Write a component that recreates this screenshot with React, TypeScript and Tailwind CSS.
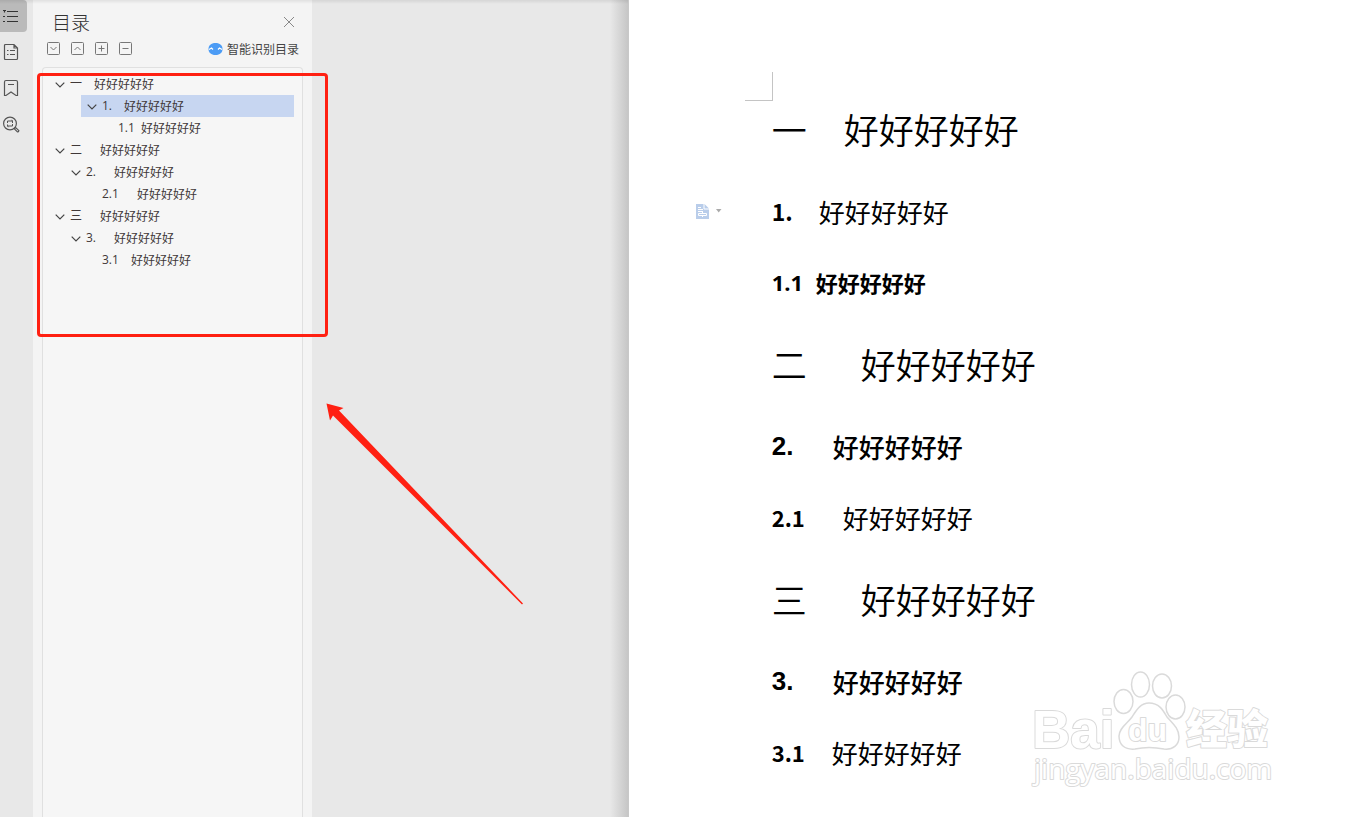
import React from "react";

type TreeRow = {
  label: string;
  text: string;
  indent: string;
  labelWidth: string;
  expandable?: boolean;
  selected?: boolean;
};

const TITLE = "好好好好好";

const rows: TreeRow[] = [
  { label: "一", text: TITLE, indent: "ml-3", labelWidth: "w-6", expandable: true },
  { label: "1.", text: TITLE, indent: "ml-[38px] pl-1.5", labelWidth: "w-[22px]", expandable: true, selected: true },
  { label: "1.1", text: TITLE, indent: "ml-[75px]", labelWidth: "w-[23px]" },
  { label: "二", text: TITLE, indent: "ml-3", labelWidth: "w-[30px]", expandable: true },
  { label: "2.", text: TITLE, indent: "ml-7", labelWidth: "w-7", expandable: true },
  { label: "2.1", text: TITLE, indent: "ml-[59px]", labelWidth: "w-[35px]" },
  { label: "三", text: TITLE, indent: "ml-3", labelWidth: "w-[30px]", expandable: true },
  { label: "3.", text: TITLE, indent: "ml-7", labelWidth: "w-7", expandable: true },
  { label: "3.1", text: TITLE, indent: "ml-[59px]", labelWidth: "w-[29px]" },
];

function OutlineTree() {
  return (
    <ul role="tree" aria-label="目录" className="pt-[5px] pr-2">
      {rows.map((row, i) => (
        <li
          key={i}
          role="treeitem"
          aria-selected={row.selected ?? false}
          className={`flex h-[22px] items-center text-[12px] leading-[22px] text-[#403838] ${row.indent} ${
            row.selected ? "bg-[#c7d6f1]" : ""
          }`}
        >
          {row.expandable && (
            <button type="button" aria-label="折叠" className="flex w-[15px] shrink-0">
              <svg width="10" height="6" viewBox="0 0 10 6" className="mt-0.5" fill="none" stroke="#444" strokeWidth="1.2">
                <path d="M0.7 0.7 5 5 9.3 0.7" />
              </svg>
            </button>
          )}
          <span className={`shrink-0 font-['Open_Sans','Noto_Sans_CJK_SC',sans-serif] ${row.labelWidth}`}>{row.label}</span>
          <span>{row.text}</span>
        </li>
      ))}
    </ul>
  );
}

function SideRail() {
  const button = "flex h-8 w-[27px] items-center pl-[3px]";
  return (
    <nav aria-label="导航" className="flex w-[33px] shrink-0 flex-col gap-1 bg-[#e8e8e8]">
      <button type="button" aria-label="目录" className={`${button} rounded-r-sm bg-[#bababa]`}>
        <svg width="16" height="16" viewBox="0 0 16 16" fill="none" stroke="#333" strokeWidth="1.2">
          <path d="M4 3.500H15M4 8.500H15M4 13.500H15M0 2.500H3M1.500 2.500V4.500M0 8.500H2M0 13.500H2" />
        </svg>
      </button>
      <button type="button" aria-label="章节" className={button}>
        <svg width="16" height="18" viewBox="0 0 16 18" fill="none" stroke="#555" strokeWidth="1.2">
          <path d="M2.500 1.500H11L14.500 5V15.500Q14.500 16.500 13.500 16.500H2.500Q1.500 16.500 1.500 15.500V2.500Q1.500 1.500 2.500 1.500ZM11 1.500V5H14.500M4 7.500H5.500M7 7.500H12M4 11.500H5.500M7 11.500H12" />
        </svg>
      </button>
      <button type="button" aria-label="书签" className={button}>
        <svg width="16" height="18" viewBox="0 0 16 18" fill="none" stroke="#555" strokeWidth="1.2">
          <path d="M3 1.500H13Q14.500 1.500 14.500 3V16.500H13L8 13 3 16.500H1.500V3Q1.500 1.500 3 1.500ZM5 5.500H11" />
        </svg>
      </button>
      <button type="button" aria-label="查找和替换" className={button}>
        <svg width="17" height="17" viewBox="0 0 17 17" fill="none" stroke="#555" strokeWidth="1.2">
          <circle cx="7" cy="7.500" r="6.400" />
          <path d="M4.500 7V5H9.500V7M8.500 3.800 9.500 5M9.500 8V10H4.500V8.500M5.500 11.200 4.500 10" strokeWidth="1" />
          <path d="M11.300 12.800 12.600 11.600 15.900 14.600Q15.600 16 14.500 16Z" />
        </svg>
      </button>
    </nav>
  );
}

const tools = [
  { name: "展开", d: "M3.5 5 6.5 8 9.5 5" },
  { name: "收起", d: "M3.5 8 6.5 5 9.5 8" },
  { name: "新增", d: "M3.5 6.5H9.5M6.5 3.5V9.5" },
  { name: "删除", d: "M3.5 6.5H9.5" },
];

function OutlinePanel() {
  return (
    <aside className="flex w-[279px] shrink-0 flex-col bg-[#f4f4f4] pr-[9px] pl-[9px]">
      <header className="flex h-[39px] items-center justify-between pt-1 pr-2 pl-2.5">
        <h2 className="text-[19px] leading-8 font-light text-[#333]">目录</h2>
        <button type="button" aria-label="关闭">
          <svg width="12" height="12" viewBox="0 0 12 12" stroke="#888" strokeWidth="1">
            <path d="M1 1 11 11M11 1 1 11" />
          </svg>
        </button>
      </header>
      <div className="flex h-[19px] items-center pr-1 pl-[5px]">
        <div className="flex gap-[11px]">
          {tools.map((tool) => (
            <button key={tool.name} type="button" aria-label={tool.name}>
              <svg width="13" height="13" viewBox="0 0 13 13" fill="none" stroke="#777" strokeWidth="1">
                <rect x="0.5" y="0.5" width="12" height="12" rx="1" />
                <path d={tool.d} />
              </svg>
            </button>
          ))}
        </div>
        <button type="button" className="ml-auto flex items-center gap-1 text-[12px] leading-[19px] text-[#444]">
          <svg width="15" height="12" viewBox="0 0 15 12">
            <path d="M7.500 0C12 0 14.500 2.500 14.500 6S12 12 7.500 12 .5 9.500 .5 6 3 0 7.500 0Z" fill="#4c9cf5" />
            <path d="M1 6.500 3.500 5 5 6.500M14 6.500 11.500 5 10 6.500" fill="none" stroke="#fff" strokeWidth="1.200" />
          </svg>
          智能识别目录
        </button>
      </div>
      <div className="mt-[9px] flex-1 rounded-t border border-b-0 border-[#e0e0e0] bg-[#f6f6f6]">
        <OutlineTree />
      </div>
    </aside>
  );
}

type Heading = { level: 1 | 2 | 3; label: string; labelStyle: string; textStyle: string };

const headings: Heading[] = [
  { level: 1, label: "一", labelStyle: "w-[72px] text-[35px] font-[350]", textStyle: "text-[35px] font-[350]" },
  { level: 2, label: "1.", labelStyle: "w-[47px] text-[23px] font-bold", textStyle: "text-[26px]" },
  { level: 3, label: "1.1", labelStyle: "w-11 font-['Open_Sans',sans-serif] text-[22px] font-bold", textStyle: "text-[22px] font-bold" },
  { level: 1, label: "二", labelStyle: "w-[89px] text-[35px] font-[350]", textStyle: "text-[35px] font-[350]" },
  { level: 2, label: "2.", labelStyle: "w-[61px] font-['Liberation_Sans',sans-serif] text-[26px] font-bold", textStyle: "text-[26px] font-medium" },
  { level: 3, label: "2.1", labelStyle: "w-[71px] text-[22px] font-bold", textStyle: "text-[26px]" },
  { level: 1, label: "三", labelStyle: "w-[89px] text-[35px] font-[350]", textStyle: "text-[35px] font-[350]" },
  { level: 2, label: "3.", labelStyle: "w-[61px] font-['Liberation_Sans',sans-serif] text-[26px] font-bold", textStyle: "text-[26px] font-medium" },
  { level: 3, label: "3.1", labelStyle: "w-[60px] text-[22px] font-bold", textStyle: "text-[26px]" },
];

const rowHeights = { 1: "h-[92px]", 2: "h-[72px]", 3: "h-[71px]" };

function DocumentPage() {
  return (
    <main className="relative min-w-0 grow-[717] basis-0 overflow-hidden bg-white text-black">
      <div className="mt-[72px] ml-[116px] h-[29px] w-7 border-r border-b border-[#c4c4c4]" />
      <article className="-mt-[18px] pl-[143px]">
        {headings.map((h, i) => {
          const Tag = `h${h.level}` as "h1" | "h2" | "h3";
          return (
            <Tag key={i} className={`relative flex items-center whitespace-nowrap ${rowHeights[h.level]}`}>
              {i === 1 && (
                <button type="button" aria-label="段落选项" className="absolute -left-[76px] flex items-center gap-1.5">
                  <svg width="13" height="15" viewBox="0 0 13 15">
                    <path d="M0 0H8.500L13 4.500V15H0Z" fill="#b9cdea" />
                    <path d="M8 0V5H13M2 3.500H5M2 5.500H7M2 7.500H7M2.500 9.500H10.500V11.500H2.500ZM6.500 9.500V8M6.500 11.500V13" fill="none" stroke="#fff" strokeWidth="1" />
                  </svg>
                  <svg width="7" height="4" viewBox="0 0 7 4">
                    <path d="M1 0H6.500L3.700 3.500Z" fill="#aaa" />
                  </svg>
                </button>
              )}
              <span className={`shrink-0 ${h.labelStyle}`}>{h.label}</span>
              <span className={h.textStyle}>{TITLE}</span>
            </Tag>
          );
        })}
      </article>
      <Watermark />
    </main>
  );
}

function Watermark() {
  return (
    <svg
      className="absolute right-16 bottom-[21px]"
      width="250"
      height="130"
      viewBox="0 0 250 130"
      fill="#fff"
      stroke="#dadada"
      strokeWidth="2"
      strokeLinejoin="round"
    >
      <g paintOrder="stroke">
        <text x="1" y="82" fontSize="53" fontWeight="700" fontFamily="Liberation Sans, sans-serif">Bai</text>
        <text x="155" y="78" fontSize="41" fontWeight="900" fontFamily="Noto Sans CJK SC, sans-serif">经验</text>
        <text x="3" y="113" fontSize="28" fontWeight="400" fontFamily="Open Sans, sans-serif">jingyan.baidu.com</text>
      </g>
      <g strokeWidth="1.5">
        <ellipse cx="92.500" cy="35.500" rx="9.500" ry="12" />
        <ellipse cx="109.500" cy="18.500" rx="9" ry="12.500" />
        <ellipse cx="131" cy="20" rx="9.500" ry="12" />
        <ellipse cx="144.500" cy="41" rx="9.500" ry="12" />
        <path d="M118 37C128 37 132 44 136 51 141 57 148 62 148 71 148 79 142 84 133 83 123 81 113 81 104 83 94 84 88 79 88 70 88 62 96 58 101 51 105 45 109 37 118 37Z" />
      </g>
      <text x="97" y="75" fontSize="32" fontWeight="700" fontFamily="Liberation Sans, sans-serif" paintOrder="stroke">du</text>
    </svg>
  );
}

export default function App() {
  return (
    <div className="relative flex min-h-screen overflow-hidden bg-[#e8e8e8] font-['Noto_Sans_CJK_SC',sans-serif]">
      <SideRail />
      <OutlinePanel />
      <div className="flex min-w-0 grow-[316] basis-0 justify-end border-r border-[#c8c8c8]">
        <div className="w-[18px] bg-linear-to-r from-[#e8e8e8] to-[#c6c6c6]" />
      </div>
      <DocumentPage />
      <div className="pointer-events-none absolute top-0 left-0 h-1 w-[628px] bg-linear-to-b from-black/8 to-transparent" />
      <div className="pointer-events-none absolute top-[73px] left-[37px] h-[264px] w-[291px] rounded-sm border-3 border-[#ff2012]" />
      <svg className="pointer-events-none absolute top-[403px] left-[326px]" width="198" height="202" viewBox="0 0 198 202">
        <path d="M0.500 0.500 17.500 5 13 7.500 197 200.500 196 201.500 7 12.500 4 17.500Z" fill="#ff2012" />
      </svg>
    </div>
  );
}
